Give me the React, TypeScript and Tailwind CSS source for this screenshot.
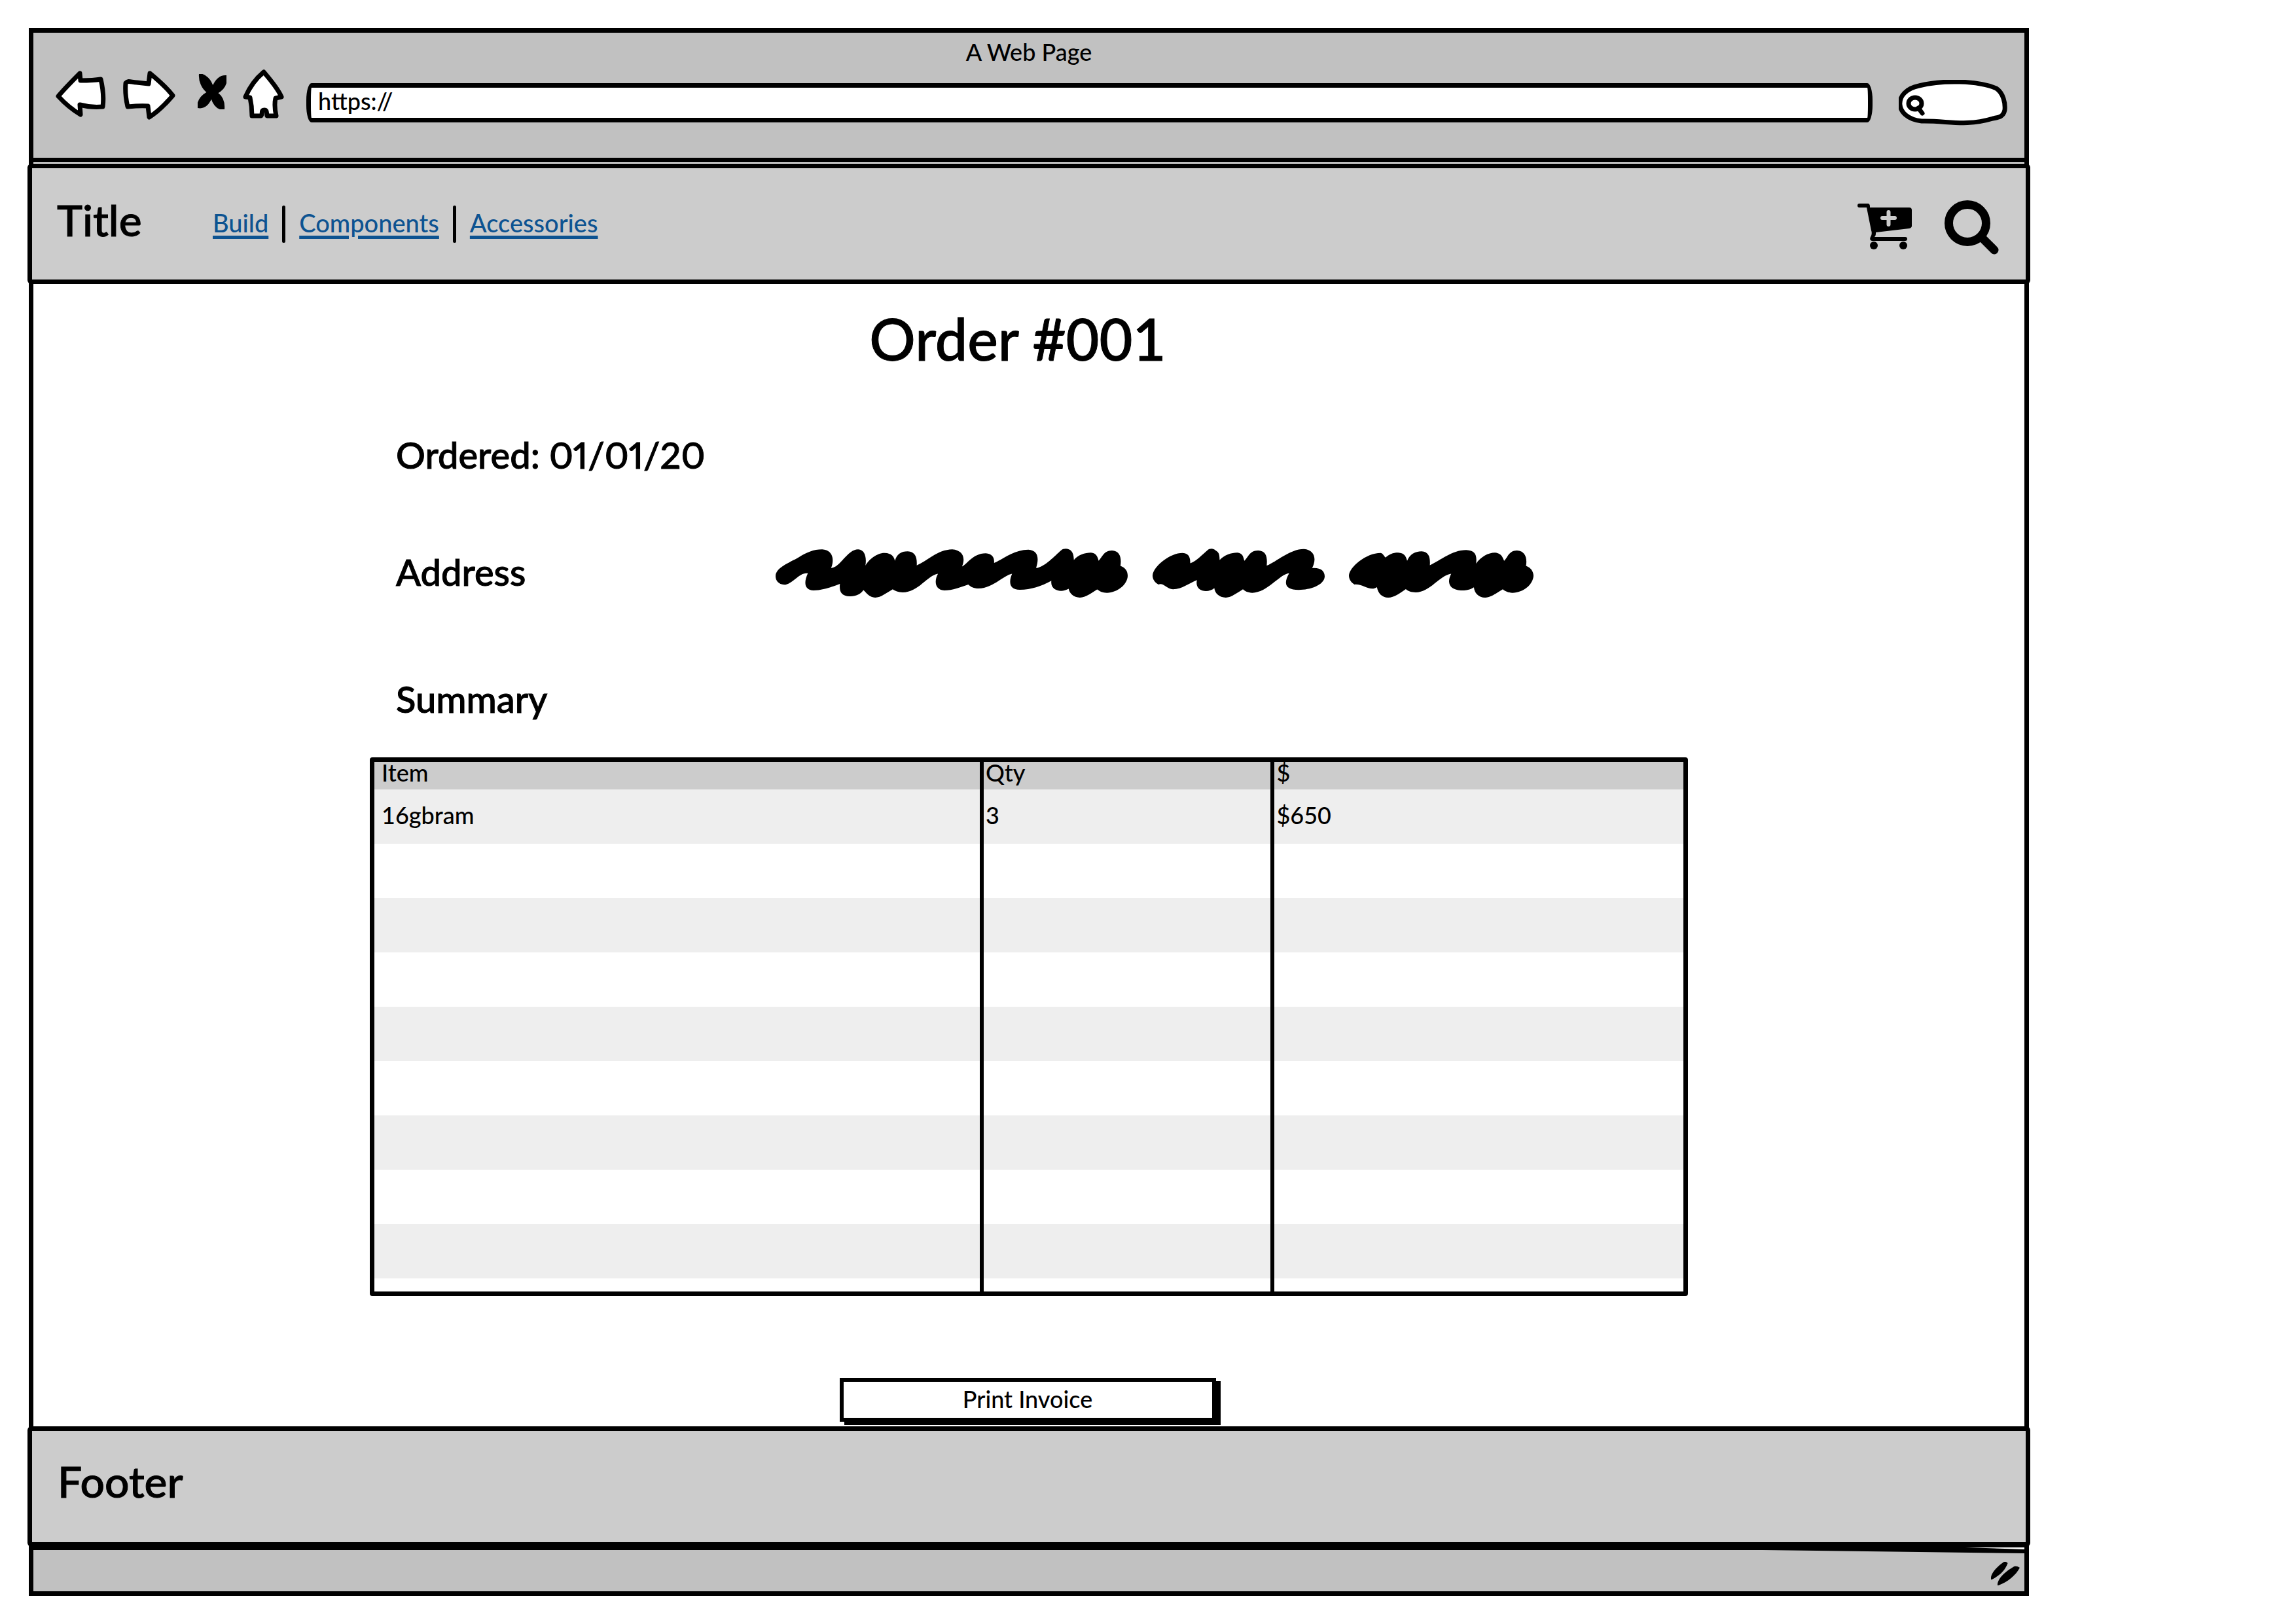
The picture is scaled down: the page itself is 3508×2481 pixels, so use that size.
import React from "react";

type Item = { item: string; qty: string; price: string };

const items: Item[] = [
  { item: "16gbram", qty: "3", price: "$650" },
  ...Array.from({ length: 8 }, () => ({ item: "", qty: "", price: "" })),
];

function BackIcon() {
  return (
    <svg viewBox="0 0 77 72" className="h-[72px] w-[77px]" fill="white" stroke="black" strokeWidth="7" strokeLinejoin="round" aria-hidden="true">
      <path d="M37 4C26 15 14 27 4 39C15 51 26 60 38 67L37 52C48 55 61 56 72 55C74 40 72 26 69 13C58 15 47 15 38 15Z" />
    </svg>
  );
}

function ForwardIcon() {
  return (
    <svg viewBox="0 0 80 75" className="h-[75px] w-[80px]" fill="white" stroke="black" strokeWidth="7" strokeLinejoin="round" aria-hidden="true">
      <path d="M41 4C52 13 66 25 76 38C65 51 53 63 40 71L38 54C28 53 17 54 7 55C4 42 3 31 4 19C8 14 13 18 21 18L39 20Z" />
    </svg>
  );
}

function StopIcon() {
  return (
    <svg viewBox="0 0 44 54" className="h-[54px] w-[44px]" aria-hidden="true">
      <path d="M3 0C12 1 20 9 23 20C28 8 34 2 44 3C45 15 39 24 30 29C38 35 41 43 40 54C29 54 24 46 21 36C17 46 10 53 0 51C0 41 6 33 15 28C7 22 2 11 3 0Z" stroke="black" strokeWidth="2" strokeLinejoin="round" />
    </svg>
  );
}

function HomeIcon() {
  return (
    <svg viewBox="0 0 63 75" className="h-[75px] w-[63px]" fill="white" stroke="black" strokeWidth="7" strokeLinejoin="round" aria-hidden="true">
      <path d="M32 4C41 15 53 28 59 42L50 44C48 53 49 62 51 71L37 71C36 67 38 62 33 62C27 62 31 67 28 71L14 71C14 61 13 52 11 43L4 42C10 28 20 14 32 4Z" />
    </svg>
  );
}

function CartIcon() {
  return (
    <svg viewBox="0 0 83 70" className="h-[70px] w-[83px]" aria-hidden="true">
      <path d="M3 0H16C18 0 19 2 19 4V6H79Q83 6 83 10V34Q83 37 79 38L28 44C28 47 28 49 26 51H73A3 3 0 0 1 73 57H22C18 56 19 52 21 49C22 46 22 44 21 41L14 6H3A3 3 0 0 1 3 0Z" />
      <circle cx="25" cy="64" r="6" />
      <circle cx="70" cy="64" r="6" />
      <path d="M38 22H57M47.500 13V32" stroke="#cccccc" strokeWidth="6" strokeLinecap="round" />
    </svg>
  );
}

function SearchIcon() {
  return (
    <svg viewBox="0 0 83 83" className="size-[83px]" fill="none" stroke="black" aria-hidden="true">
      <circle cx="35" cy="35" r="28.500" strokeWidth="13" />
      <path d="M58 58L76 76" strokeWidth="13" strokeLinecap="round" />
    </svg>
  );
}

function LongScribble() {
  return (
    <svg viewBox="64 58 1407 224" preserveAspectRatio="none" className="h-[75px] w-[538px]" aria-hidden="true">
      <path d="M64 184C64 145 120 122 155 99C190 75 215 62 250 62C292 64 300 108 286 147C322 146 350 62 394 62C422 64 428 100 423 136C436 108 470 77 500 78C528 79 537 95 541 114C548 84 565 71 592 71C622 73 630 98 628 135C670 116 710 63 770 62C812 66 824 100 809 140C826 135 850 80 904 80C930 82 939 100 937 124C975 105 1015 64 1074 63C1112 66 1118 100 1105 147C1140 142 1180 90 1205 66C1215 56 1236 56 1246 70C1255 82 1255 96 1256 110C1272 88 1300 77 1324 77C1345 79 1350 95 1355 114C1370 96 1375 68 1408 67C1440 69 1447 100 1442 137C1462 146 1471 160 1471 183C1470 222 1430 260 1388 260C1370 260 1360 254 1349 245C1330 258 1305 282 1280 282C1255 282 1238 262 1235 242C1205 262 1160 250 1166 205C1125 230 1085 246 1040 246C997 246 995 210 1009 173C975 180 930 240 875 240C855 240 843 232 834 222C805 234 770 249 738 249C700 246 697 205 713 173C670 180 635 258 572 258C553 257 542 252 532 244C510 258 485 282 462 282C440 282 428 262 415 248C402 268 385 277 360 276C325 275 318 252 321 219C290 232 255 249 216 249C180 247 175 215 193 171C160 164 130 223 99 223C75 221 64 203 64 184Z" />
    </svg>
  );
}

function MediumScribble() {
  return (
    <svg viewBox="51 58 644 224" preserveAspectRatio="none" className="h-[75px] w-[263px]" aria-hidden="true">
      <path d="M51 182C51 142 115 78 163 78C188 79 192 100 192 125C215 116 238 84 256 66C265 57 278 56 287 67C302 76 301 92 302 110C320 88 345 77 368 77C388 79 391 97 394 114C410 98 412 68 446 67C477 69 481 98 478 136C515 118 565 60 617 60C659 64 665 108 648 147C680 144 695 160 695 186C693 226 640 247 598 247C548 247 539 220 562 171C525 176 480 260 424 260C407 259 397 253 389 244C370 258 345 282 325 282C300 282 284 262 282 239C258 264 207 255 217 202C190 214 160 244 128 244C103 242 92 212 73 222C60 214 51 198 51 182Z" />
    </svg>
  );
}

function ShortScribble() {
  return (
    <svg viewBox="786 58 691 224" preserveAspectRatio="none" className="h-[75px] w-[282px]" aria-hidden="true">
      <path d="M786 182C787 143 850 78 905 78C915 82 917 92 923 99C937 85 950 77 970 77C995 79 999 94 1004 114C1014 85 1033 71 1058 71C1086 73 1091 100 1089 134C1130 112 1170 66 1225 65C1260 67 1266 90 1262 127C1280 96 1307 77 1333 77C1356 79 1361 97 1367 114C1382 97 1384 68 1415 67C1446 69 1454 100 1449 137C1467 145 1477 162 1477 183C1475 222 1440 260 1398 260C1382 259 1372 254 1362 244C1342 258 1318 282 1296 282C1272 282 1255 260 1254 235C1235 249 1220 250 1205 249C1163 246 1151 215 1169 173C1125 180 1090 258 1036 258C1019 257 1009 253 999 243C978 260 955 282 933 282C910 282 894 261 891 234C865 256 838 218 807 222C795 214 786 198 786 182Z" />
    </svg>
  );
}

const links = ["Build", "Components", "Accessories"];

export default function App() {
  return (
    <div className="min-h-screen bg-white pt-[43px] pr-[408px] pb-[43px] pl-11 font-['Lato',sans-serif] text-4xl/[44px] font-medium text-black">
      <div className="border-x-[7px] border-black">
        <header className="-mx-[7px] border-[7px] border-black bg-[#c1c1c1]">
          <h1 className="pt-[7px] text-center">A Web Page</h1>
          <div className="flex h-[140px] items-start pr-[26px] pl-[34px]">
            <button type="button" aria-label="Back" className="mt-[7px]"><BackIcon /></button>
            <button type="button" aria-label="Forward" className="mt-[7px] ml-[26px]"><ForwardIcon /></button>
            <button type="button" aria-label="Stop" className="mt-3 ml-[34px]"><StopIcon /></button>
            <button type="button" aria-label="Home" className="mt-[5px] ml-[25px]"><HomeIcon /></button>
            <input
              aria-label="Address"
              defaultValue="https://"
              className="mt-[26px] ml-[34px] h-[60px] min-w-0 flex-1 rounded-[8px/26px] border-[7px] border-black bg-white px-[11px] pb-[6px]"
            />
            <label className="relative mt-[21px] ml-10 h-[70px] w-[166px] shrink-0">
              <svg viewBox="0 0 166 70" className="absolute inset-0 size-full" fill="white" stroke="black" strokeWidth="7" aria-hidden="true">
                <path d="M35 63C-8 58-9 17 31 9C68 0 121 1 149 13C160 20 163 36 162 46C160 56 154 57 144 59C100 72 75 62 35 63Z" />
                <ellipse cx="25" cy="36" rx="10" ry="9" />
                <path d="M30 43L36 51" strokeLinecap="round" />
              </svg>
              <input type="search" aria-label="Search the web" className="absolute inset-y-3 right-3 left-12 bg-transparent outline-none" />
            </label>
          </div>
        </header>

        <nav className="-mx-[9px] mt-[2px] flex h-[184px] items-center rounded-[6px] border-[7px] border-black bg-[#cccccc] pr-[41px] pl-[38px]">
          <span className="w-[238px] pb-3 text-[66px]/[80px] [-webkit-text-stroke:1px]">Title</span>
          <ul className="flex items-center text-[38px]/[44px]">
            {links.map((name, i) => (
              <li key={name} className="flex items-center">
                {i > 0 && <span className="mx-[21px] h-[57px] w-[5px] rounded-full bg-black" />}
                <a href="#" className="pb-[4px] text-[#0d5391] underline decoration-[5px] underline-offset-[5px]">{name}</a>
              </li>
            ))}
          </ul>
          <button type="button" aria-label="Add to cart" className="ml-auto pt-2"><CartIcon /></button>
          <button type="button" aria-label="Search" className="ml-[50px] pt-[10px]"><SearchIcon /></button>
        </nav>

        <main className="flex flex-col px-[514px]">
          <h2 className="mt-[30px] self-center pr-[34px] text-[88px]/[106px] [-webkit-text-stroke:1px]">Order #001</h2>
          <section className="pl-10 text-[56px]/[68px] [-webkit-text-stroke:1px]">
            <p className="mt-[91px] proportional-nums">Ordered: 01/01/20</p>
            <div className="mt-[109px] flex items-center">
              <h3 className="w-[580px] pb-1">Address</h3>
              <LongScribble />
              <span className="ml-[38px]"><MediumScribble /></span>
              <span className="ml-[37px]"><ShortScribble /></span>
            </div>
            <h3 className="mt-[121px]">Summary</h3>
          </section>
          <div className="mt-[55px] rounded-[4px] border-[7px] border-black">
            <table className="w-full table-fixed border-separate border-spacing-0 text-left">
              <colgroup>
                <col className="w-37/80" />
                <col className="w-2/9" />
                <col />
              </colgroup>
              <thead className="bg-[#cccccc]">
                <tr className="h-[42px] align-top leading-[32px]">
                  <th className="p-0 pl-[11px] font-medium">Item</th>
                  <th className="border-l-[6px] border-black p-0 pl-[3px] font-medium">Qty</th>
                  <th className="border-l-[6px] border-black p-0 pl-[3px] font-medium">$</th>
                </tr>
              </thead>
              <tbody>
                {items.map((row, i) => (
                  <tr key={i} className="h-[83px] odd:bg-[#eeeeee]">
                    <td className="p-0 pb-[6px] pl-[11px]">{row.item}</td>
                    <td className="border-l-[6px] border-black p-0 pb-[6px] pl-[3px]">{row.qty}</td>
                    <td className="border-l-[6px] border-black p-0 pb-[6px] pl-[3px]">{row.price}</td>
                  </tr>
                ))}
              </tbody>
              <tfoot>
                <tr className="h-[20px]">
                  <td className="p-0" />
                  <td className="border-l-[6px] border-black p-0" />
                  <td className="border-l-[6px] border-black p-0" />
                </tr>
              </tfoot>
            </table>
          </div>
          <button
            type="button"
            className="mt-[125px] mr-[4px] mb-[7px] h-[67px] w-[575px] self-center border-[6px] border-black bg-white pb-1 shadow-[7px_5px_0_#000]"
          >
            Print Invoice
          </button>
        </main>

        <footer className="-mx-[9px] flex h-[184px] items-center rounded-[6px] border-[7px] border-black bg-[#cccccc] pl-[39px] text-[66px]/[80px] [-webkit-text-stroke:1px]">
          <span className="pb-4">Footer</span>
        </footer>
      </div>
      <div className="relative h-[75px] border-[7px] border-t-[5px] border-black bg-[#c1c1c1]">
        <svg viewBox="0 0 400 10" className="absolute -top-[5px] right-0 h-[10px] w-[400px]" aria-hidden="true">
          <path d="M0 5L400 10V0H0Z" />
          <path d="M310 1L400 1V4Z" fill="white" />
        </svg>
        <svg viewBox="0 0 31 36" className="absolute right-[7px] bottom-[9px] h-[36px] w-[44px]" preserveAspectRatio="none" aria-hidden="true">
          <path d="M0 27C-1 16 9 5 14 0Q16-1 18 2C15 14 9 21 1 27ZM7 36C7 23 19 12 25 7Q28 6 31 9C27 20 18 31 8 36Z" />
        </svg>
      </div>
    </div>
  );
}
